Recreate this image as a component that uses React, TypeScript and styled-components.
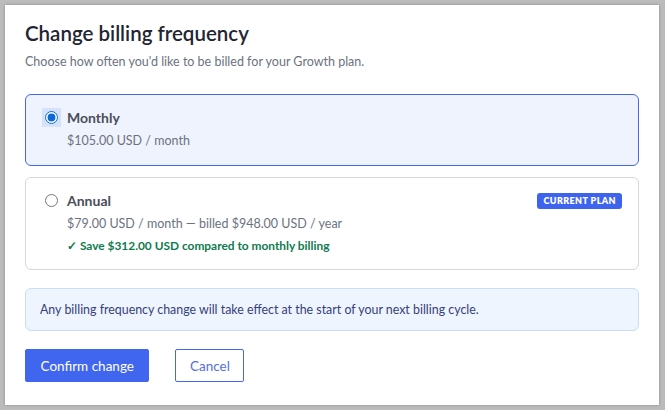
import React, { useState } from "react";
import styled, { createGlobalStyle } from "styled-components";

const Global = createGlobalStyle`
  html, body { margin: 0; padding: 0; }
  body {
    background: #bcbcbc;
    font-family: Lato, "Noto Sans", Arial, sans-serif;
    -webkit-font-smoothing: antialiased;
  }
  #root { padding: 5px 6px 5px 5px; }
`;

const Dialog = styled.div`
  width: 654px;
  height: 400px;
  box-sizing: border-box;
  background: #ffffff;
  box-shadow: 0 0 3px rgba(0, 0, 0, 0.25);
  padding: 14px 20px 20px;
  display: flex;
  flex-direction: column;
`;

const Title = styled.h2`
  margin: 0;
  font-size: 20.5px;
  line-height: 28px;
  font-weight: 600;
  color: #1f2533;
`;

const Subtitle = styled.p`
  margin: 5px 0 0;
  font-size: 12.5px;
  line-height: 20px;
  color: #6b7280;
`;

const Options = styled.div`
  margin-top: 22px;
  display: flex;
  flex-direction: column;
  gap: 11px;
`;

const OptionCard = styled.label<{ $selected: boolean }>`
  display: flex;
  align-items: flex-start;
  gap: 6px;
  padding: 12px 16px 14px 16px;
  border-radius: 6px;
  border: 1px solid ${(p) => (p.$selected ? "#4666ec" : "#d4d7de")};
  background: ${(p) => (p.$selected ? "#eff3fd" : "#ffffff")};
  cursor: pointer;
`;

const RadioBox = styled.span<{ $selected: boolean }>`
  width: 19px;
  height: 19px;
  flex: none;
  display: flex;
  align-items: center;
  justify-content: center;
  background: ${(p) => (p.$selected ? "#d6e1fb" : "transparent")};
  margin-top: 1px;
`;

const Radio = styled.input`
  margin: 0;
  width: 13px;
  height: 13px;
  accent-color: #0b6ad8;
`;

const OptionBody = styled.div`
  flex: 1;
  display: flex;
  flex-direction: column;
`;

const OptionHead = styled.div`
  display: flex;
  align-items: center;
  justify-content: space-between;
  min-height: 21px;
`;

const OptionName = styled.span`
  font-size: 14px;
  line-height: 21px;
  font-weight: 700;
  color: #4a4e5a;
`;

const Badge = styled.span`
  background: #3e63ee;
  color: #ffffff;
  font-size: 9px;
  font-weight: 800;
  letter-spacing: 0.4px;
  line-height: 16px;
  padding: 0 6px;
  border-radius: 3px;
  text-transform: uppercase;
  margin-top: 1px;
`;

const Price = styled.span`
  margin-top: 3px;
  font-size: 12.5px;
  line-height: 20px;
  color: #6b7280;
`;

const Savings = styled.span`
  margin-top: 3px;
  font-size: 11.9px;
  line-height: 18px;
  font-weight: 700;
  color: #0f7a4e;
`;

const Notice = styled.div`
  margin-top: 18px;
  padding: 11px 14px;
  background: #eef5fe;
  border: 1px solid #c9def8;
  border-radius: 6px;
  font-size: 12.4px;
  line-height: 19px;
  color: #36407a;
`;

const Actions = styled.div`
  margin-top: 18px;
  display: flex;
  gap: 26px;
`;

const Button = styled.button<{ $primary?: boolean }>`
  height: 33px;
  box-sizing: border-box;
  padding: 0 ${(p) => (p.$primary ? "14.5px" : "13.5px")};
  font-family: inherit;
  font-size: 13.5px;
  border-radius: 2px;
  cursor: pointer;
  border: 1px solid ${(p) => (p.$primary ? "#4066f0" : "#4667ec")};
  background: ${(p) => (p.$primary ? "#4066f0" : "#ffffff")};
  color: ${(p) => (p.$primary ? "#ffffff" : "#5570dc")};
`;

type Plan = {
  id: string;
  name: string;
  price: string;
  savings?: string;
  current?: boolean;
};

const plans: Plan[] = [
  { id: "monthly", name: "Monthly", price: "$105.00 USD / month" },
  {
    id: "annual",
    name: "Annual",
    price: "$79.00 USD / month — billed $948.00 USD / year",
    savings: "✓ Save $312.00 USD compared to monthly billing",
    current: true,
  },
];

export default function App() {
  const [choice, setChoice] = useState("monthly");
  return (
    <>
      <Global />
      <Dialog>
        <Title>Change billing frequency</Title>
        <Subtitle>Choose how often you'd like to be billed for your Growth plan.</Subtitle>
        <Options>
          {plans.map((plan) => {
            const selected = plan.id === choice;
            return (
              <OptionCard key={plan.id} $selected={selected}>
                <RadioBox $selected={selected}>
                  <Radio
                    type="radio"
                    name="frequency"
                    checked={selected}
                    onChange={() => setChoice(plan.id)}
                  />
                </RadioBox>
                <OptionBody>
                  <OptionHead>
                    <OptionName>{plan.name}</OptionName>
                    {plan.current && <Badge>Current plan</Badge>}
                  </OptionHead>
                  <Price>{plan.price}</Price>
                  {plan.savings && <Savings>{plan.savings}</Savings>}
                </OptionBody>
              </OptionCard>
            );
          })}
        </Options>
        <Notice>Any billing frequency change will take effect at the start of your next billing cycle.</Notice>
        <Actions>
          <Button $primary>Confirm change</Button>
          <Button>Cancel</Button>
        </Actions>
      </Dialog>
    </>
  );
}
